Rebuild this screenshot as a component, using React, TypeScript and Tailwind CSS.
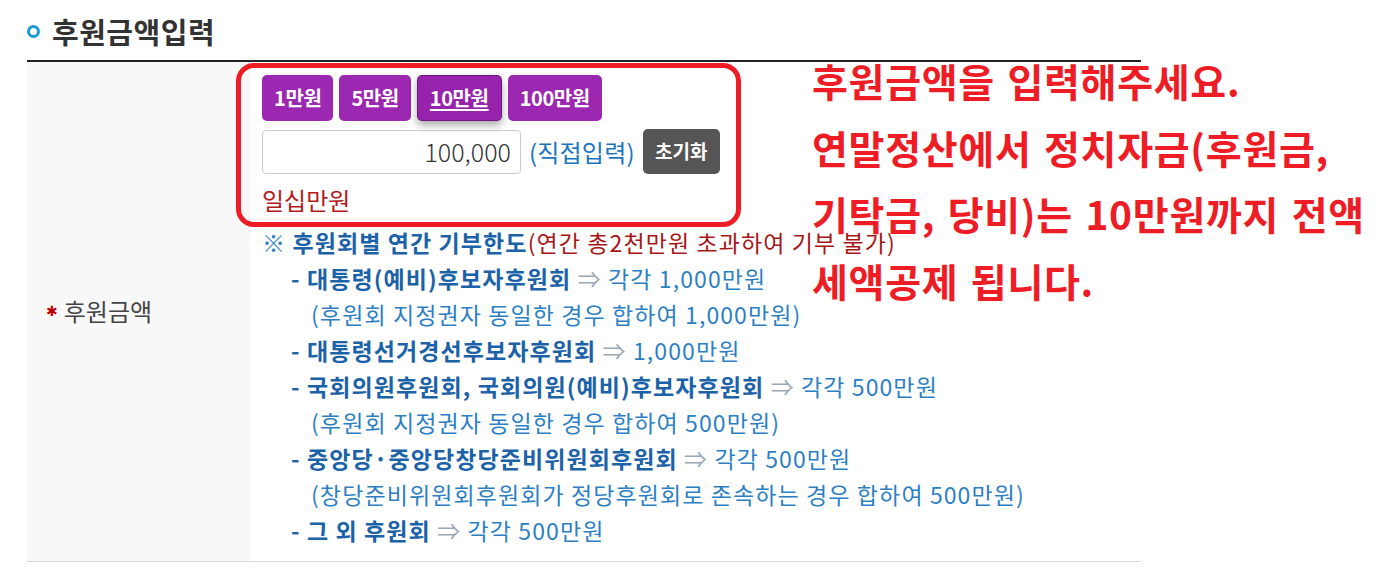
import React from "react";

const FONT = { fontFamily: '"Noto Sans CJK KR", "Noto Sans", sans-serif' };

function Line({ bold, rest }: { bold: string; rest: string }) {
  return (
    <div className="pl-[29px]">
      <span className="font-bold text-[#1b62a8]">{bold}</span>{" "}
      <span className="text-[#9aa8b8]">⇒</span>{" "}
      <span className="text-[#2d7fc4]">{rest}</span>
    </div>
  );
}

function Sub({ text }: { text: string }) {
  return <div className="pl-[49px] text-[#2d7fc4]">{text}</div>;
}

export default function App() {
  return (
    <div className="relative w-[1374px] h-[573px] bg-white overflow-hidden" style={FONT}>
      {/* Title */}
      <div className="flex items-center h-[60px] pl-[27px] pt-[3px]">
        <span className="w-[13px] h-[13px] rounded-full border-[3px] border-[#1a9ad6] mr-[12px]" />
        <h2 className="text-[29px] font-bold text-[#333] tracking-[0.5px]">후원금액입력</h2>
      </div>

      {/* Table */}
      <div className="ml-[27px] w-[1114px] border-t-2 border-[#222] border-b border-b-[#d9d9d9] flex">
        <div className="w-[223px] bg-[#f8f8f8] flex items-center pl-[19px] pb-[2px]">
          <span className="text-[#c00000] text-[14px] mr-[6px] leading-none" style={{ fontFamily: '"DejaVu Sans", sans-serif' }}>✱</span>
          <span className="text-[24px] text-[#444]">후원금액</span>
        </div>
        <div className="flex-1 pl-[12px] pt-[13px] pb-[13px]">
          <div className="flex gap-[6px]">
            {["1만원", "5만원", "10만원", "100만원"].map((t) => {
              const active = t === "10만원";
              return (
                <button
                  key={t}
                  className={
                    "h-[46px] px-[12px] rounded-[5px] text-white font-bold text-[20px] tracking-[-0.4px] " +
                    (active
                      ? "bg-[#9722ab] border border-dotted border-[#3a1040] underline underline-offset-[3px] shadow-[0_4px_8px_rgba(0,0,0,0.35)]"
                      : "bg-[#9c27b0]")
                  }
                >
                  {t}
                </button>
              );
            })}
          </div>
          <div className="flex items-center mt-[8px]">
            <div className="w-[259px] h-[44px] border border-[#ccc] rounded-[4px] flex items-center justify-end pr-[9px] text-[25px] font-light text-[#333]">
              100,000
            </div>
            <span className="ml-[8px] text-[24px] text-[#1a75c0] tracking-[0.2px]">(직접입력)</span>
            <button className="ml-[8px] w-[77px] h-[45px] bg-[#555] rounded-[5px] text-white font-bold text-[19px]">
              초기화
            </button>
          </div>
          <div className="mt-[8px] text-[24px] leading-[36px] text-[#b51a1a]">일십만원</div>
          <div className="mt-[6px] text-[23px] leading-[36px] tracking-[1.1px]">
            <div>
              <span className="text-[#2d7fc4]">※</span>{" "}
              <span className="font-bold text-[#1b62a8]">후원회별 연간 기부한도</span>
              <span className="text-[#a81616]">(연간 총2천만원 초과하여 기부 불가)</span>
            </div>
            <Line bold="- 대통령(예비)후보자후원회" rest="각각 1,000만원" />
            <Sub text="(후원회 지정권자 동일한 경우 합하여 1,000만원)" />
            <Line bold="- 대통령선거경선후보자후원회" rest="1,000만원" />
            <Line bold="- 국회의원후원회, 국회의원(예비)후보자후원회" rest="각각 500만원" />
            <Sub text="(후원회 지정권자 동일한 경우 합하여 500만원)" />
            <Line bold="- 중앙당·중앙당창당준비위원회후원회" rest="각각 500만원" />
            <Sub text="(창당준비위원회후원회가 정당후원회로 존속하는 경우 합하여 500만원)" />
            <Line bold="- 그 외 후원회" rest="각각 500만원" />
          </div>
        </div>
      </div>

      {/* Annotation box */}
      <div className="absolute left-[236px] top-[63px] w-[505px] h-[164px] border-[5px] border-[#ee1c25] rounded-[18px] pointer-events-none" />

      {/* Annotation text */}
      <div className="absolute left-[812px] top-[62px] flex flex-col gap-[30.5px] text-[39px] leading-[36px] font-bold text-[#ee1c25] tracking-[0.7px] [word-spacing:3px]">
        <div>후원금액을 입력해주세요.</div>
        <div>연말정산에서 정치자금(후원금,</div>
        <div>기탁금, 당비)는 10만원까지 전액</div>
        <div>세액공제 됩니다.</div>
      </div>
    </div>
  );
}
